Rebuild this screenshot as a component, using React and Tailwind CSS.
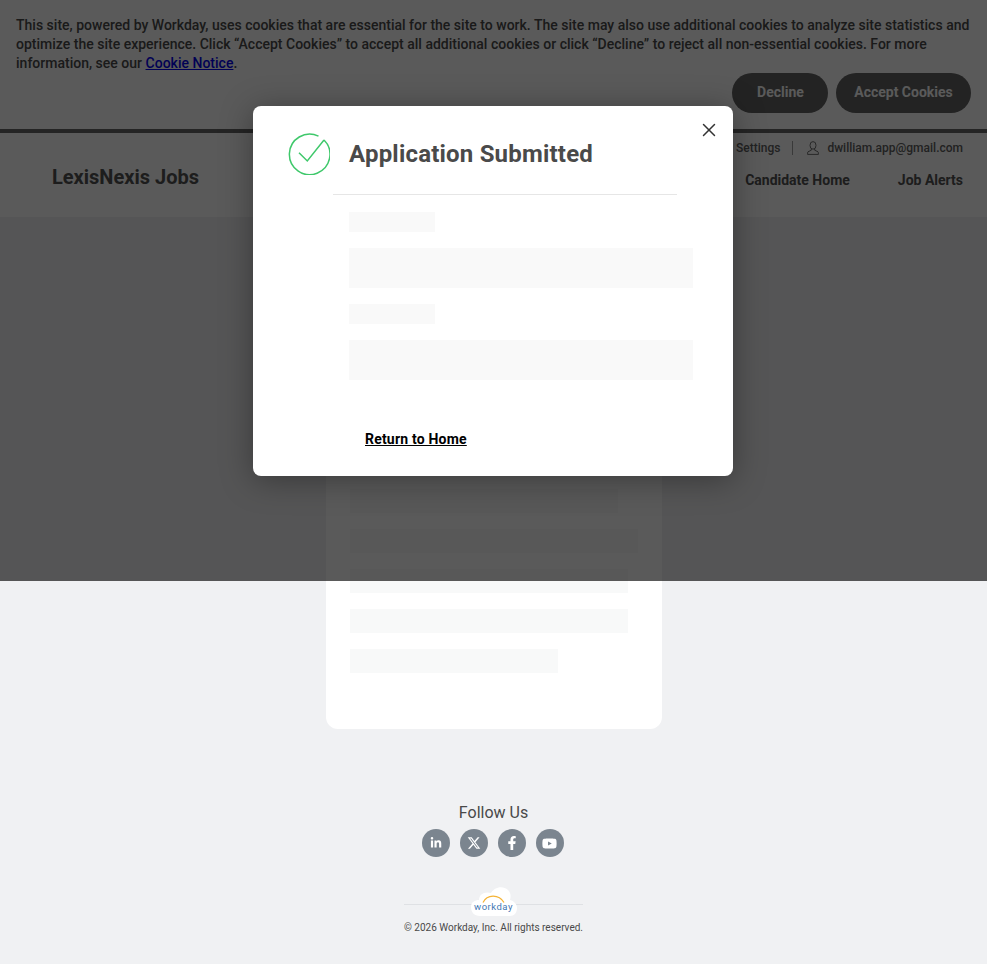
import React from 'react';
import { FaLinkedinIn, FaFacebookF, FaYoutube } from 'react-icons/fa';
import { FaXTwitter } from 'react-icons/fa6';
import { X } from 'lucide-react';

const skeletonRows = ['w-[268px]', 'w-[288px]', 'w-[278px]', 'w-[278px]', 'w-[208px]'];

const socials = [
  { label: 'LinkedIn', icon: FaLinkedinIn, size: 12 },
  { label: 'X', icon: FaXTwitter, size: 14 },
  { label: 'Facebook', icon: FaFacebookF, size: 14 },
  { label: 'YouTube', icon: FaYoutube, size: 15 },
];

const CookieBanner = () => (
  <div className="h-[133px] bg-white border-b-4 border-[#666666] px-4 pt-[16px]">
    <p className="text-sm leading-[19px] font-medium tracking-[0.007px] text-[#494949]">
      This site, powered by Workday, uses cookies that are essential for the site to work. The site may also use additional cookies to analyze site statistics and optimize the site experience. Click “Accept Cookies” to accept all additional cookies or click “Decline” to reject all non-essential cookies. For more information, see our{' '}
      <a href="#" className="text-[#0000ee] underline">Cookie Notice</a>.
    </p>
    <div className="flex justify-end gap-2">
      <button className="h-10 w-24 pl-px pb-0.5 rounded-full bg-[#616161] text-sm font-bold text-white">Decline</button>
      <button className="h-10 w-[135px] pb-0.5 rounded-full bg-[#616161] text-sm font-bold text-white">Accept Cookies</button>
    </div>
  </div>
);

const Header = () => (
  <header className="h-[84px] bg-white flex justify-between pl-[52px] pr-6">
    <div className="text-xl font-bold text-[#515151] pt-[30px] leading-7">LexisNexis Jobs</div>
    <div className="flex flex-col items-end">
      <div className="flex items-center h-[30px] text-xs font-medium text-[#5e5e5e]">
        <span>Settings</span>
        <span className="w-px h-[14px] bg-[#a0a0a0] mx-3" />
        <svg width="12" height="14" viewBox="0 0 12 14" fill="none" stroke="#5e5e5e" strokeWidth="0.9" className="mr-2 ml-[2px]">
          <ellipse cx="6" cy="4.4" rx="3" ry="3.8" />
          <path d="M4.3 8 V9.2 L1 10.8 C0.7 11 0.6 11.3 0.6 13.4 H11.4 C11.4 11.3 11.3 11 11 10.8 L7.7 9.2 V8" />
        </svg>
        <span>dwilliam.app@gmail.com</span>
      </div>
      <nav className="flex gap-12 text-sm font-bold text-[#515151] pt-[7px]">
        <span>Candidate Home</span>
        <span>Job Alerts</span>
      </nav>
    </div>
  </header>
);

const Footer = () => (
  <footer className="flex flex-col items-center pt-[74px] h-[235px]">
    <div className="text-base leading-5 text-[#494949]">Follow Us</div>
    <div className="flex gap-[10px] mt-[6px] -ml-[2px]">
      {socials.map((s) => {
        const Icon = s.icon;
        return (
          <a key={s.label} href="#" aria-label={s.label} className="w-7 h-7 rounded-full bg-[#7b858f] flex items-center justify-center text-white">
            <Icon size={s.size} />
          </a>
        );
      })}
    </div>
    <div className="relative w-[179px] h-px bg-[#dfe1e4] mt-[47px]">
      <div className="absolute left-[67px] -top-[18px] w-[46px] h-[30px]">
        <svg viewBox="0 0 46 30" className="w-full h-full">
          <path d="M9 30 C3 30 0 26 0 21 C0 16 4 14 8 14 C8 8 14 5 20 7 C23 1 32 -1 37 4 C40 7 40 10 39 14 C43 15 46 18 46 22 C46 27 43 30 39 30 Z" fill="#fff" />
          <path d="M12 16.5 C16 8 28 8 33 16.5" fill="none" stroke="#f5b335" strokeWidth="1.2" />
        </svg>
        <span className="absolute -left-px right-0 top-[14px] text-center text-[9.5px] leading-[13px] tracking-[0.5px] text-[#3f77b3]">workday</span>
      </div>
    </div>
    <div className="text-[10px] leading-3 text-[#494949] mt-[17px]">© 2026 Workday, Inc. All rights reserved.</div>
  </footer>
);

const SuccessDialog = () => (
  <div className="absolute left-[253px] top-[106px] w-[480px] h-[370px] bg-white rounded-lg shadow-[0_4px_32px_rgba(0,0,0,0.35)]">
    <button aria-label="Close" className="absolute right-[13px] top-[13px] text-[#333333]">
      <X size={22} strokeWidth={1.6} />
    </button>
    <div className="flex items-center pl-[35px] pt-[27px] gap-[19px]">
      <svg width="42" height="42" viewBox="0 0 42 42" fill="none" stroke="#3fc86b" strokeWidth="1.5" className="shrink-0">
        <path d="M36 7 A20.3 20.3 0 1 1 30.5 3.1" />
        <path d="M11 19.7 L19.3 28 L36 7" />
      </svg>
      <h2 className="text-2xl font-bold tracking-[0.2px] text-[#4a4a4a]">Application Submitted</h2>
    </div>
    <div className="h-px bg-[#e6e6e6] ml-[80px] mr-[56px] mt-[19px]" />
    <div className="ml-[96px] mr-10 mt-[17px] flex flex-col gap-4">
      <div className="h-5 w-[86px] bg-[#f9f9f9]" />
      <div className="h-10 bg-[#f9f9f9]" />
      <div className="h-5 w-[86px] bg-[#f9f9f9]" />
      <div className="h-10 bg-[#f9f9f9]" />
    </div>
    <a href="#" className="block ml-[112px] mt-[50px] text-sm leading-[18px] font-bold tracking-[0.2px] text-black underline">Return to Home</a>
  </div>
);

const App = () => (
  <div className="relative h-[964px] overflow-hidden bg-[#f0f1f3] font-['Roboto',sans-serif]">
    <CookieBanner />
    <Header />
    <main className="h-[512px] pt-10">
      <div className="ml-[326px] w-[336px] h-[472px] bg-white rounded-b-xl flex flex-col gap-4 px-6 pt-[232px]">
        {skeletonRows.map((w, i) => (
          <div key={i} className={`h-6 bg-[#f8f9f9] ${w}`} />
        ))}
      </div>
    </main>
    <Footer />
    <div className="absolute inset-x-0 top-0 h-[581px] bg-[#020102]/[0.65]" />
    <SuccessDialog />
  </div>
);

export default App;
